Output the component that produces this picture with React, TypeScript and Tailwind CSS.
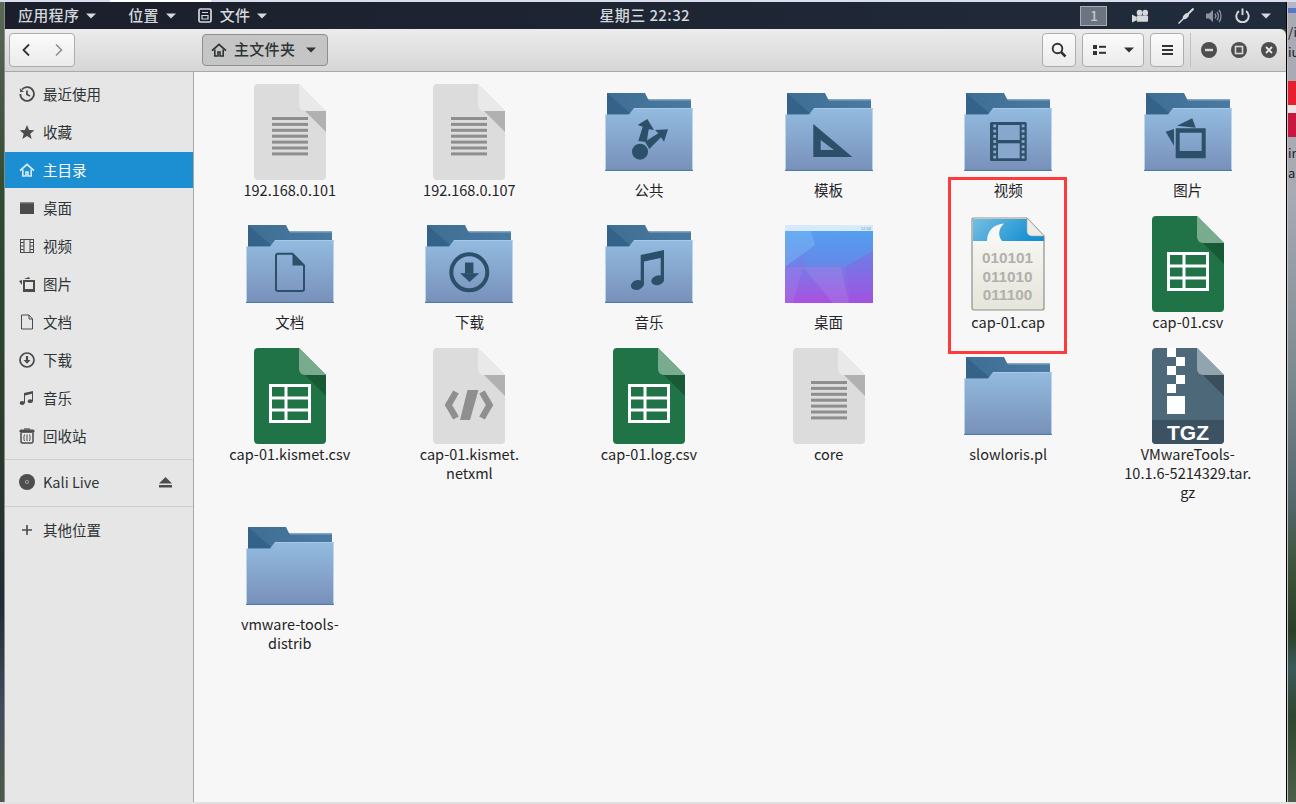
import React from "react";

const Caret = ({ c = "#d5d8dc", w = 10 }: { c?: string; w?: number }) => (
  <svg width={w} height="6" viewBox="0 0 10 6" className="shrink-0"><path d="M0 0.5H10L5 5.5z" fill={c} /></svg>
);

const DocBase = ({ body, fold, shadow, children }: { body: string; fold: string; shadow: string; children?: React.ReactNode }) => (
  <svg width="72" height="96" viewBox="0 0 72 96">
    <path d="M4 0H45L72 27V92a4 4 0 0 1-4 4H4a4 4 0 0 1-4-4V4a4 4 0 0 1 4-4z" fill={body} />
    <path d="M45 0L72 27H51a6 6 0 0 1-6-6z" fill={fold} />
    <path d="M51 27H72V48z" fill={shadow} />
    {children}
  </svg>
);

const TextDoc = () => (
  <DocBase body="#dcdcdc" fold="#e9e9e9" shadow="#b1b1b1">
    {[0, 1, 2, 3, 4, 5, 6].map((i) => (
      <rect key={i} x="18" y={33 + i * 5.9} width="36" height="3" fill="#8e8e8e" />
    ))}
  </DocBase>
);

const CodeDoc = () => (
  <DocBase body="#dcdcdc" fold="#e9e9e9" shadow="#b1b1b1">
    <g fill="none" stroke="#8f8f8f" strokeWidth="6.5">
      <path d="M23 44L15.5 57L23 70" />
      <path d="M49 44L56.5 57L49 70" />
    </g>
    <path d="M34.5 42H45.5L37 72H27z" fill="#8f8f8f" />
  </DocBase>
);

const Sheet = () => (
  <DocBase body="#1f7346" fold="#79ab8e" shadow="#185a36">
    <g fill="none" stroke="#fff" strokeWidth="3">
      <rect x="16.5" y="37.5" width="39" height="36" />
      <path d="M16.5 50H55.5M16.5 62H55.5M32 37.5V73.5" />
    </g>
  </DocBase>
);

const Tgz = () => (
  <svg width="72" height="96" viewBox="0 0 72 96">
    <path d="M4 0H45L72 27V92a4 4 0 0 1-4 4H4a4 4 0 0 1-4-4V4a4 4 0 0 1 4-4z" fill="#4d6879" />
    <path d="M0 72H72V92a4 4 0 0 1-4 4H4a4 4 0 0 1-4-4z" fill="#3c5161" />
    <path d="M45 0L72 27H51a6 6 0 0 1-6-6z" fill="#91a5ae" />
    <path d="M51 27H72V48z" fill="#3a4e5b" />
    <g fill="#fff">
      <rect x="15" y="0" width="9" height="9" />
      <rect x="24" y="9" width="9" height="9" />
      <rect x="15" y="18" width="9" height="9" />
      <rect x="24" y="27" width="9" height="9" />
      <rect x="15" y="36" width="9" height="9" />
      <rect x="15" y="48" width="18" height="18" />
    </g>
    <text x="36" y="92" textAnchor="middle" fill="#fff" fontFamily="Liberation Sans, sans-serif" fontWeight="700" fontSize="21">TGZ</text>
  </svg>
);

const Cap = () => (
  <svg width="74" height="96" viewBox="0 0 74 96">
    <defs>
      <linearGradient id="capb" x1="0" y1="0" x2="1" y2="0.3"><stop offset="0" stopColor="#74bfe2" /><stop offset="1" stopColor="#1690d2" /></linearGradient>
      <linearGradient id="capw" x1="0" y1="0" x2="0" y2="1"><stop offset="0" stopColor="#fbfbfa" /><stop offset="1" stopColor="#e6e5da" /></linearGradient>
    </defs>
    <path d="M2 2H56L73 20V92a2 2 0 0 1-2 2H3a2 2 0 0 1-2-2V3z" fill="url(#capw)" stroke="#8f8f8a" strokeWidth="1.2" />
    <path d="M2 3H56V15a5 5 0 0 0 5 5H73V25H2z" fill="url(#capb)" />
    <path d="M16 25C16 14 24 8 33 7.500C27 13 27 20 31 25z" fill="#f7f7f4" />
    <path d="M56 2L73 20H61a5 5 0 0 1-5-5z" fill="#ecece8" stroke="#a9a9a4" strokeWidth="0.6" />
    <g fill="#b0b0ac" fontFamily="Liberation Sans, sans-serif" fontWeight="700" fontSize="15.300" textAnchor="middle">
      <text x="36.500" y="46.500">010101</text>
      <text x="36.500" y="65.500">011010</text>
      <text x="36.500" y="84">011100</text>
    </g>
  </svg>
);

const Folder = ({ id, children }: { id: string; children?: React.ReactNode }) => (
  <svg width="88" height="78" viewBox="0 0 88 78">
    <defs>
      <linearGradient id={`f${id}`} x1="0" y1="0" x2="0" y2="1"><stop offset="0" stopColor="#93bbe0" /><stop offset="1" stopColor="#7890b9" /></linearGradient>
      <linearGradient id={`b${id}`} x1="0" y1="0" x2="1" y2="0"><stop offset="0" stopColor="#3f6e95" /><stop offset="1" stopColor="#4a7aa1" /></linearGradient>
    </defs>
    <path d="M2 0H40L43 6H86V22H2z" fill={`url(#b${id})`} />
    <path d="M43 6H86V7.5H44z" fill="#86a8c2" />
    <path d="M2 0L26 21H2z" fill="#356289" />
    <path d="M0 21.5H24L29 15H88V78H0z" fill={`url(#f${id})`} />
    <path d="M0.5 22V77M87.5 15.5V77" stroke="#bcd5ee" strokeWidth="1" />
    <path d="M29 15.5H88" stroke="#a9c8e6" strokeWidth="1" />
    <rect x="0" y="76.8" width="88" height="1.2" fill="#4f7ca9" />
    <g fill="#2c5069">{children}</g>
  </svg>
);

const Wall = () => (
  <svg width="88" height="78" viewBox="0 0 88 78">
    <defs>
      <linearGradient id="wg" x1="0" y1="0" x2="0" y2="1"><stop offset="0" stopColor="#52a6f2" /><stop offset="0.45" stopColor="#6a86e8" /><stop offset="1" stopColor="#ab4fe0" /></linearGradient>
    </defs>
    <rect width="88" height="78" fill="url(#wg)" />
    <path d="M0 6H26L30 20L0 42z" fill="#7fc0f6" opacity="0.4" />
    <path d="M30 20L62 6H88V26L60 42H18z" fill="#4f9cf0" opacity="0.3" />
    <path d="M0 42H18L8 78H0z" fill="#a57ce8" opacity="0.4" />
    <path d="M18 42H56L64 78H48z" fill="#a88ae8" opacity="0.35" />
    <path d="M60 42L88 26V78H66z" fill="#8a58e0" opacity="0.3" />
    <rect width="88" height="6" fill="#d6eafb" />
    <text x="86" y="4.6" textAnchor="end" fontSize="4" fill="#8297a8" fontFamily="Liberation Sans, sans-serif">12:34</text>
  </svg>
);

const folderGlyphs: Record<string, React.ReactNode> = {
  pub: (
    <>
      <circle cx="35" cy="58.7" r="8" />
      <path d="M33.3 48L41.7 49L43.7 36.3L49 37L42.3 26L32.7 32L37.7 33.7z" />
      <path d="M44.3 56L40 48.7L53.3 40.3L50 37L63 36.3L59 48.7L56 44.3z" />
    </>
  ),
  tpl: <path fillRule="evenodd" d="M28.3 31V64H67.3zM35.7 47V57H49z" />,
  vid: (
    <>
      <rect x="26" y="29" width="36.7" height="39" rx="1.5" />
      <g fill="#89a7cd">
        <rect x="34" y="32" width="21.7" height="15" />
        <rect x="34" y="50.3" width="21.7" height="15" />
        {[0, 1, 2, 3, 4, 5, 6].map((i) => (
          <React.Fragment key={i}>
            <rect x="29.3" y={31.5 + i * 5.2} width="2.8" height="2.8" />
            <rect x="57.7" y={31.5 + i * 5.2} width="2.8" height="2.8" />
          </React.Fragment>
        ))}
      </g>
    </>
  ),
  pic: (
    <>
      <path fillRule="evenodd" d="M31.7 35.3H61.7V65.3H31.7zM35.7 39.7V58H57.7V39.7z" />
      <path d="M33 32.7L48.3 25.3L51.7 34.7z" />
      <path d="M21.7 38.7L30 36V52.7z" />
    </>
  ),
  doc: (
    <>
      <path d="M32 28.7H46.5L58 40.5V64a2 2 0 0 1-2 2H32a2 2 0 0 1-2-2V30.7a2 2 0 0 1 2-2z" fill="none" stroke="#2c5069" strokeWidth="2" />
      <path d="M46.5 28.7L58 40.5H46.5z" />
    </>
  ),
  dl: (
    <>
      <circle cx="44.3" cy="47.3" r="18" fill="none" stroke="#2c5069" strokeWidth="4" />
      <rect x="40" y="37.5" width="8.4" height="11" />
      <path d="M35 48.3H54.3L44.6 56.9z" />
    </>
  ),
  mus: (
    <>
      <path d="M35.7 30L59 25V55H55.7V33L39 36.5V60H35.7z" />
      <ellipse cx="32.3" cy="60" rx="6.5" ry="4.8" transform="rotate(-15 32.3 60)" />
      <ellipse cx="52.7" cy="55.3" rx="6.5" ry="4.8" transform="rotate(-15 52.7 55.3)" />
    </>
  ),
};

type Item = { label: React.ReactNode; icon: React.ReactNode };
const F = (id: string) => <Folder id={id}>{folderGlyphs[id]}</Folder>;
const items: Item[] = [
  { label: "192.168.0.101", icon: <TextDoc /> },
  { label: "192.168.0.107", icon: <TextDoc /> },
  { label: "公共", icon: F("pub") },
  { label: "模板", icon: F("tpl") },
  { label: "视频", icon: F("vid") },
  { label: "图片", icon: F("pic") },
  { label: "文档", icon: F("doc") },
  { label: "下载", icon: F("dl") },
  { label: "音乐", icon: F("mus") },
  { label: "桌面", icon: <Wall /> },
  { label: "cap-01.cap", icon: <Cap /> },
  { label: "cap-01.csv", icon: <Sheet /> },
  { label: "cap-01.kismet.csv", icon: <Sheet /> },
  { label: <>cap-01.kismet.<br />netxml</>, icon: <CodeDoc /> },
  { label: "cap-01.log.csv", icon: <Sheet /> },
  { label: "core", icon: <TextDoc /> },
  { label: "slowloris.pl", icon: <Folder id="slow" /> },
  { label: <>VMwareTools-<br />10.1.6-5214329.tar.<br />gz</>, icon: <Tgz /> },
  { label: <>vmware-tools-<br />distrib</>, icon: <Folder id="vm" /> },
];

const s = { width: 16, height: 16, viewBox: "0 0 16 16", className: "shrink-0" };
const Home = ({ c }: { c: string }) => (
  <svg {...s} fill="none" stroke={c} strokeWidth="1.9">
    <path d="M1 8.6L8 2.4L15 8.6" />
    <path d="M3.8 7.5V14H7V10H9V14H12.2V7.5" strokeWidth="1.6" />
  </svg>
);
const g = "#4b4b4b";
const sideIcons: Record<string, React.ReactNode> = {
  recent: (
    <svg {...s} fill="none" stroke={g} strokeWidth="1.8">
      <path d="M3 3.5A6.8 6.8 0 1 1 1.3 8" />
      <path d="M0.8 2.2L1.2 6H5z" fill={g} stroke="none" />
      <path d="M8 4.5V8.5L11 10" />
    </svg>
  ),
  star: <svg {...s}><path d="M8 1L10.1 5.9L15.3 6.3L11.3 9.7L12.6 15L8 12.1L3.4 15L4.7 9.7L0.7 6.3L5.9 5.9z" fill={g} /></svg>,
  desk: <svg {...s}><path d="M1 2.5H15V14H1z" fill={g} /><rect x="1" y="2.5" width="14" height="1" fill="#777" /></svg>,
  video: (
    <svg {...s} fill="none" stroke={g} strokeWidth="1">
      <rect x="1.500" y="1.500" width="13" height="13" />
      <path d="M5 1.500V14.500M11 1.500V14.500" />
      <path d="M1.500 4.500H5M1.500 8H5M1.500 11.500H5M11 4.500H14.500M11 8H14.500M11 11.500H14.500" />
    </svg>
  ),
  pic: (
    <svg {...s}>
      <path fillRule="evenodd" d="M4 4H16V16H4zM6 6V13H14V6z" fill={g} />
      <path d="M5 3L10 1L11 3z" fill={g} />
      <path d="M0 5L3 4V9z" fill={g} />
    </svg>
  ),
  doc: <svg {...s} fill="none" stroke={g} strokeWidth="1"><path d="M2.5 1H10L13.5 5V15H2.5zM10 1V5H13.5" /></svg>,
  down: (
    <svg {...s} fill="none" stroke={g}>
      <circle cx="8" cy="8" r="7" strokeWidth="1.7" />
      <path d="M6.9 4H9.1V8H11.5L8 11.8L4.5 8H6.9z" fill={g} stroke="none" />
    </svg>
  ),
  music: (
    <svg {...s} fill={g}>
      <path d="M5 3L14 1V11H13V3.8L6 5.4V13H5z" />
      <ellipse cx="3.2" cy="13" rx="2.5" ry="1.9" />
      <ellipse cx="11.2" cy="11.2" rx="2.5" ry="1.9" />
    </svg>
  ),
  trash: (
    <svg {...s} fill="none" stroke={g}>
      <rect x="1" y="2.2" width="14" height="2" rx="1" strokeWidth="1.2" fill={g} />
      <path d="M5 1H11" strokeWidth="1.2" />
      <path d="M2 5V13.5a1.5 1.5 0 0 0 1.5 1.5H12.500a1.5 1.5 0 0 0 1.500-1.500V5" strokeWidth="1.5" />
      <path d="M5.500 6.500C4.700 9 4.700 11 5.500 13M8 6.500V13M10.500 6.500C11.300 9 11.300 11 10.500 13" strokeWidth="1" />
    </svg>
  ),
  disc: (
    <svg {...s}>
      <circle cx="8" cy="8" r="8" fill="#4e4e4e" />
      <circle cx="8" cy="8" r="2.100" fill="#9a9a9a" />
      <circle cx="8" cy="8" r="1" fill="#4e4e4e" />
    </svg>
  ),
  plus: <svg {...s}><path d="M7.200 3H8.800V7.200H13V8.800H8.800V13H7.200V8.800H3V7.200H7.200z" fill={g} /></svg>,
};

const Row = ({ icon, label, active, end, mb = "mb-[2px]" }: { icon: React.ReactNode; label: string; active?: boolean; end?: React.ReactNode; mb?: string }) => (
  <div className={`h-[36px] flex items-center pl-[14px] gap-[8px] ${mb} ${active ? "bg-[#1b8fd1] text-white" : "text-[#2e3436]"}`}>
    {icon}
    <span className="flex-1">{label}</span>
    {end}
  </div>
);

const btn = "h-[34px] flex items-center justify-center rounded-[4px] border border-[#adadad] bg-gradient-to-b from-[#fbfbfb] to-[#ebebeb]";

const TopBar = () => (
  <div className="h-[27px] flex items-center bg-gradient-to-r from-[#1b1f2b] via-[#1e2533] to-[#202c3c] text-[#d5d8dc] text-[15px] font-medium relative shrink-0">
    <span className="ml-[13px] tracking-[0.3px]">应用程序</span>
    <span className="ml-[7px]"><Caret /></span>
    <span className="ml-[32px] tracking-[0.3px]">位置</span>
    <span className="ml-[7px]"><Caret /></span>
    <svg width="14" height="15" viewBox="0 0 14 15" className="ml-[22px]">
      <rect x="1" y="1" width="12" height="13" rx="1.500" fill="none" stroke="#d5d8dc" strokeWidth="1.700" />
      <path d="M4 4.500H10M4 7.500H10V11H4z" fill="none" stroke="#d5d8dc" strokeWidth="1.200" />
    </svg>
    <span className="ml-[8px] tracking-[0.3px]">文件</span>
    <span className="ml-[7px]"><Caret /></span>
    <span className="ml-[332px] tracking-[0.4px] w-[92px] whitespace-nowrap">星期三 22:32</span>
    <div className="ml-[389px] w-[27px] h-[20px] bg-[#6b7480] border border-[#a9adb2] flex items-center justify-center text-[14px] text-[#c3c6ca]">1</div>
    <svg width="17" height="14" viewBox="0 0 18 14" className="ml-[25px]" fill="#d5d8dc">
      <circle cx="8" cy="3.500" r="3" /><circle cx="14" cy="3.500" r="3" />
      <rect x="5" y="6.500" width="12" height="6.500" rx="1" /><path d="M0 5.500L5 8V11.500L0 14z" />
    </svg>
    <svg width="16" height="16" viewBox="0 0 16 16" className="ml-[29px]" fill="none" stroke="#d5d8dc">
      <path d="M0.500 15.500L6 10" strokeWidth="1.500" />
      <path d="M9 7L15.500 0.500" strokeWidth="2" />
      <ellipse cx="7.800" cy="8.200" rx="3.600" ry="2.200" transform="rotate(-45 7.800 8.200)" fill="#d5d8dc" stroke="none" />
    </svg>
    <svg width="16" height="16" viewBox="0 0 16 16" className="ml-[12px]" fill="none" stroke="#8d939b" strokeWidth="1.300">
      <path d="M0 5.500H3L7 2V14L3 10.500H0z" fill="#8d939b" stroke="none" />
      <path d="M9 5.500C10 7 10 9 9 10.500M11 3.800C12.800 6 12.800 10 11 12.200M13 2C15.700 5 15.700 11 13 14" />
    </svg>
    <svg width="15" height="15" viewBox="0 0 17 17" className="ml-[13px]" fill="none" stroke="#d5d8dc" strokeWidth="2.200">
      <path d="M4.500 3.500A7 7 0 1 0 12.500 3.500" /><path d="M8.500 0.500V8" />
    </svg>
    <span className="ml-[11px]"><Caret /></span>
  </div>
);

const Header = () => (
  <div className="h-[43px] flex items-center border-b border-[#a9a9a9] rounded-tr-[6px] bg-gradient-to-b from-[#ececec] to-[#d6d6d6] shrink-0 pb-[1px]">
    <div className={`${btn} w-[66px] ml-[4px]`}>
      <svg width="16" height="14" viewBox="0 0 16 14" className="mr-[15px]" fill="none" stroke="#2e3436" strokeWidth="1.800"><path d="M10 1.500L4.500 7L10 12.500" /></svg>
      <svg width="16" height="14" viewBox="0 0 16 14" fill="none" stroke="#8e9192" strokeWidth="1.600"><path d="M6 1.500L11.500 7L6 12.500" /></svg>
    </div>
    <div className="ml-[127px] w-[126px] h-[32px] flex items-center rounded-[4px] border border-[#8f8f8f] bg-[#c5c5c5] text-[15px] font-medium text-[#2e3436] tracking-[0.3px] whitespace-nowrap">
      <span className="ml-[8px]"><Home c="#2e3436" /></span>
      <span className="ml-[7px]">主文件夹</span>
      <span className="ml-[11px]"><Caret c="#2e3436" /></span>
    </div>
    <div className="flex-1" />
    <div className={`${btn} w-[34px]`}>
      <svg width="16" height="16" viewBox="0 0 16 16" fill="none" stroke="#2e3436"><circle cx="6.500" cy="6.500" r="4.800" strokeWidth="1.900" /><path d="M10 10L14.500 14.500" strokeWidth="2.500" /></svg>
    </div>
    <div className={`${btn} w-[62px] ml-[6px]`}>
      <svg width="13" height="10" viewBox="0 0 13 10" fill="#2e3436"><rect width="4" height="4" /><rect y="6" width="4" height="4" /><rect x="6" y="0.800" width="7" height="2" /><rect x="6" y="6.800" width="7" height="2" /></svg>
      <span className="ml-[18px]"><Caret c="#2e3436" /></span>
    </div>
    <div className={`${btn} w-[34px] ml-[6px]`}>
      <svg width="11" height="10" viewBox="0 0 11 10" fill="#2e3436"><rect width="11" height="2" /><rect y="4" width="11" height="2" /><rect y="8" width="11" height="2" /></svg>
    </div>
    <div className="w-px h-[34px] bg-[#c0c0c0] ml-[6px]" />
    <div className="flex items-center ml-[10px] mr-[9px] gap-[14px]">
      <svg width="16" height="16" viewBox="0 0 16 16"><circle cx="8" cy="8" r="8" fill="#4e4e4e" /><rect x="4" y="6.800" width="8" height="2.400" fill="#d8d8d8" /></svg>
      <svg width="16" height="16" viewBox="0 0 16 16"><circle cx="8" cy="8" r="8" fill="#4e4e4e" /><rect x="4.500" y="4.500" width="7" height="7" fill="none" stroke="#d8d8d8" strokeWidth="1.600" /></svg>
      <svg width="16" height="16" viewBox="0 0 16 16"><circle cx="8" cy="8" r="8" fill="#4e4e4e" /><path d="M5 5L11 11M11 5L5 11" stroke="#e8e8e8" strokeWidth="1.800" /></svg>
    </div>
  </div>
);

const Sidebar = () => (
  <div className="w-[189px] shrink-0 bg-[#e6e6e6] border-r border-[#a9a9a9] pt-[4px] text-[14.5px]">
    <Row icon={sideIcons.recent} label="最近使用" />
    <Row icon={sideIcons.star} label="收藏" />
    <Row icon={<Home c="#d6eefb" />} label="主目录" active />
    <Row icon={sideIcons.desk} label="桌面" />
    <Row icon={sideIcons.video} label="视频" />
    <Row icon={sideIcons.pic} label="图片" />
    <Row icon={sideIcons.doc} label="文档" />
    <Row icon={sideIcons.down} label="下载" />
    <Row icon={sideIcons.music} label="音乐" />
    <Row icon={sideIcons.trash} label="回收站" />
    <div className="h-px bg-[#cfcfcf] mt-[5px] mb-[4px]" />
    <Row
      icon={sideIcons.disc}
      label="Kali Live"
      mb="mb-0"
      end={
        <svg width="13" height="11" viewBox="0 0 13 11" className="mr-[21px]" fill="#4e4e4e"><path d="M6.500 0L13 6.500H0z" /><rect y="8" width="13" height="2.500" /></svg>
      }
    />
    <div className="h-px bg-[#cfcfcf] mt-[6px] mb-[5px]" />
    <Row icon={sideIcons.plus} label="其他位置" />
  </div>
);

const Grid = () => (
  <div className="flex-1 bg-[#f7f7f7] pt-[12px] pl-[6px] relative">
    <div className="grid grid-cols-[repeat(6,179.6px)] items-start text-[14.5px] leading-[19px] text-[#1f2426]">
      {items.map((it, i) => (
        <div key={i} className="flex flex-col items-center pb-[17px]">
          <div className="h-[96px] flex items-center justify-center">{it.icon}</div>
          <div className="text-center whitespace-nowrap">{it.label}</div>
        </div>
      ))}
    </div>
    <div className="absolute left-[754px] top-[105px] w-[119px] h-[177px] border-[3px] border-[#ff3a3a]" />
  </div>
);

export default function App() {
  return (
    <div className="w-[1296px] h-[804px] overflow-hidden flex flex-col bg-[#3a4f3a] font-['Noto_Sans_CJK_SC','Noto_Sans',sans-serif]">
      <div className="h-[2px] shrink-0 flex bg-[#d9ddee]">
        <div className="w-[110px]" />
        <div className="w-[101px] bg-white" />
      </div>
      <div className="flex-1 flex min-h-0">
        <div className="w-[5px] shrink-0 border-r border-[#8a8a8a] bg-[linear-gradient(180deg,#5a6a55_0%,#2f4a2f_25%,#2a3f2c_50%,#1f2b33_75%,#3f4c5c_88%,#4a5c48_100%)]" />
        <div className="w-[1281px] shrink-0 flex flex-col">
          <TopBar />
          <Header />
          <div className="flex-1 flex min-h-0">
            <Sidebar />
            <Grid />
          </div>
        </div>
        <div className="w-[1px] shrink-0 bg-black" />
        <div className="w-[1px] shrink-0 bg-[#c4c4c4]" />
        <div className="w-[8px] shrink-0 flex flex-col overflow-hidden text-[13px] leading-[20px] text-[#222] whitespace-nowrap">
          <div className="h-[6px] bg-[#b4b6c4]" />
          <div className="h-[5px] bg-[#5577cc]" />
          <div className="h-[68px] bg-[#a9aab4]">
            <div className="mt-[9px]">/i</div>
            <div>iu</div>
          </div>
          <div className="h-[24px] bg-[#e6202e]" />
          <div className="h-[8px] bg-[#efe3e3]" />
          <div className="h-[24px] bg-[#c8183f]" />
          <div className="h-[56px] bg-[#a9aab4]">
            <div className="mt-[6px]">ir</div>
            <div>a</div>
          </div>
          <div className="flex-1 bg-[linear-gradient(180deg,#a9aab4_0%,#7c8a8e_30%,#56686e_50%,#3c5238_62%,#2b3f28_72%,#3a5a5a_78%,#2f4630_86%,#4d5f48_100%)]" />
        </div>
      </div>
      <div className="h-[2px] shrink-0 bg-[#e2e2e2]" />
    </div>
  );
}
